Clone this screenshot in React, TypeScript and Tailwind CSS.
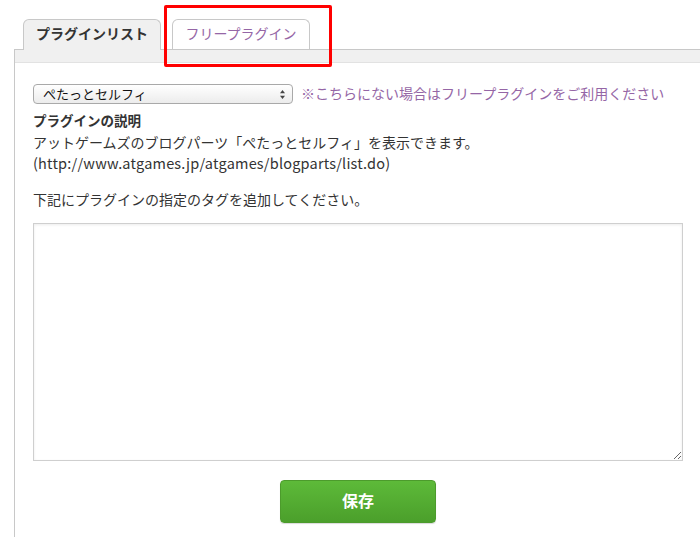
import React from "react";

export default function App() {
  return (
    <div
      className="relative flex h-[537px] w-[700px] flex-col overflow-hidden bg-white text-[#333]"
      style={{ fontFamily: '"Liberation Sans", "Noto Sans CJK JP", sans-serif' }}
    >
      {/* tabs */}
      <div className="flex h-[49px] items-end gap-[11px] pl-[23px] pt-[19px]">
        <div className="relative z-10 -mb-px flex h-[31px] w-[138px] items-center justify-center rounded-t-[6px] border border-b-0 border-[#c8c8c8] bg-[#f0f0f0] pb-[2px] text-[14px] font-bold text-[#333]">
          プラグインリスト
        </div>
        <div className="flex h-[30px] w-[138px] items-center justify-center rounded-t-[6px] border border-b-0 border-[#c8c8c8] bg-white pb-[1px] text-[14px] text-[#9566a6]">
          フリープラグイン
        </div>
      </div>

      {/* panel */}
      <div className="ml-[14px] flex-1 border-l border-t border-[#c8c8c8]">
        <div className="h-[13px] border-b border-[#e2e2e2] bg-[#f0f0f0]" />
        <div className="pl-[18px] pr-[16px] pt-[21px]">
          <div className="flex items-center gap-[8px]">
            <div className="relative flex h-[20px] w-[260px] items-center rounded-[4px] border border-[#a9a9a9] bg-gradient-to-b from-white to-[#ececec] pl-[9px] text-[13px] leading-none text-[#111]">
              ぺたっとセルフィ
              <svg
                className="absolute right-[6px] top-[4px]"
                width="7"
                height="11"
                viewBox="0 0 7 11"
              >
                <path d="M3.5 1 L6 4.2 H1 Z" fill="#444" />
                <path d="M3.5 10 L6 6.8 H1 Z" fill="#444" />
              </svg>
            </div>
            <span className="text-[14px] leading-[19px] text-[#9566a6]">
              ※こちらにない場合はフリープラグインをご利用ください
            </span>
          </div>

          <div className="mt-[8px] text-[13.5px] font-bold leading-[19px]">
            プラグインの説明
          </div>
          <div className="mt-[3px] text-[14px] leading-[19px]">
            <p>アットゲームズのブログパーツ「ぺたっとセルフィ」を表示できます。</p>
            <p
              className="text-[14.5px] tracking-[0.2px]"
              style={{ fontFamily: '"Noto Sans CJK JP", sans-serif' }}
            >
              (http://www.atgames.jp/atgames/blogparts/list.do)
            </p>
            <p>&nbsp;</p>
            <p>下記にプラグインの指定のタグを追加してください。</p>
          </div>

          <textarea className="mt-[13px] block h-[238px] w-[650px] border border-[#cfcfcf] bg-white shadow-[inset_0_1px_3px_rgba(0,0,0,0.08)] outline-none" />

          <div className="mt-[19px] flex w-[650px] justify-center">
            <button className="h-[43px] w-[156px] rounded-[4px] border border-[#4c9b2c] bg-gradient-to-b from-[#5dba39] to-[#4b9f2b] text-[16px] font-bold text-white shadow-[0_1px_1px_rgba(0,0,0,0.15)]">
              保存
            </button>
          </div>
        </div>
      </div>

      {/* red annotation box */}
      <div className="absolute left-[164px] top-[5px] h-[62px] w-[168px] rounded-[2px] border-[3px] border-[#ff0000]" />
    </div>
  );
}
